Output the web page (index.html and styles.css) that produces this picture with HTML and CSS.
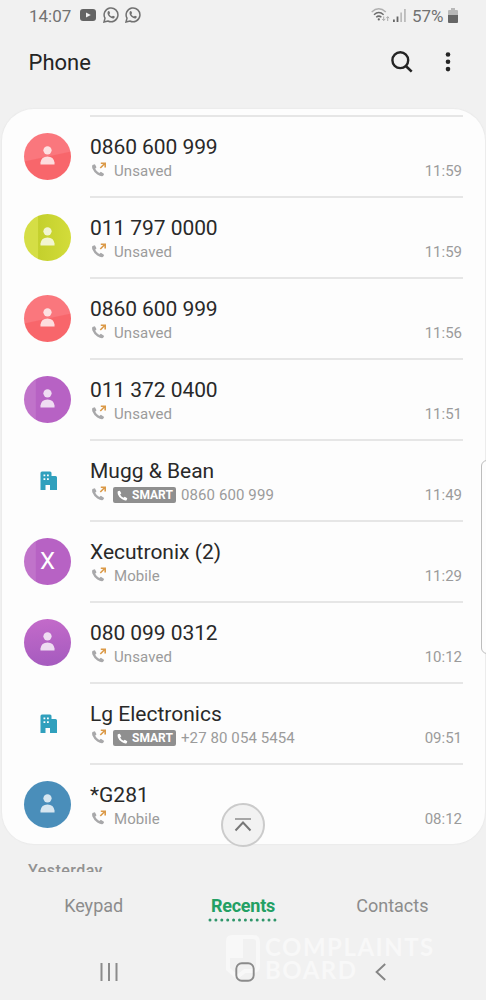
FILE: index.html
```
<!DOCTYPE html>
<html lang="en">
<head>
<meta charset="utf-8">
<title>Phone</title>
<link rel="stylesheet" href="styles.css">
</head>
<body>
<svg class="defs" width="0" height="0">
  <symbol id="handset" viewBox="0 0 14 14"><path d="M1 1.500 3.600.9 5.500 4.200 4 5.800Q5.200 8.600 8.200 10L9.900 8.700 13.100 10.600 12.200 13Q10 14 6.200 11.600 2.400 9.200 1.200 5.600.4 3 1 1.500Z"/></symbol>
  <symbol id="outgoing" viewBox="0 0 16 16"><path fill="#a8a8aa" d="M1.400 3 3.900 2.200 5.500 5.200 4.200 6.700Q5.400 9.300 8.300 11L9.900 9.700 13.200 11.900 12 14.100Q9.900 14.800 6.300 12.500 2.700 10 1.300 6.300.8 4.200 1.400 3Z"/><path fill="none" stroke="#db9a48" stroke-width="1.600" d="M9.300 6 14 1.300M9.800 1.300H14.200V5.400"/></symbol>
  <symbol id="person" viewBox="0 0 16 20"><circle cx="8" cy="4.500" r="4.400"/><path d="M.5 19.500V17.500Q1.400 11 8 11T15.500 17.500V19.500Z"/></symbol>
  <symbol id="building" viewBox="0 0 18 20"><path fill="#30a0bd" fill-rule="evenodd" d="M2 .5H10Q11.500.5 11.500 2V5H15.500Q17 5 17 6.500V19H10V14H5.500V19H.5V2Q.5.5 2 .5ZM3.500 3.500V5.300H5.300V3.500ZM7 3.500V5.300H8.800V3.500ZM3.500 7.300V9.100H5.300V7.300ZM7 7.300V9.100H8.800V7.300Z"/></symbol>
  <symbol id="chat" viewBox="0 0 16 16"><path fill="none" stroke="#717171" stroke-width="1.500" d="M1 15 2 11.200A6.900 6.900 0 1 1 4.900 14Z"/><path fill="#717171" d="M4.700 4.700Q5.400 3.700 6.300 4.200L7.100 6.100 6.300 7.200Q7.200 8.800 8.900 9.600L10 8.700 11.800 9.600Q12 10.800 10.700 11.500 9 12.100 6.400 9.800 3.800 7 4.700 4.700Z"/></symbol>
</svg>
<div class="screen">
  <div class="status">
    <span class="clock">14:07</span>
    <svg class="video" width="16" height="12" viewBox="0 0 16 12"><rect width="16" height="12" rx="3" fill="#646464"/><path fill="#f1f1f1" d="M6 3.400 10.800 6 6 8.600Z"/></svg>
    <svg class="chat" width="16" height="16"><use href="#chat"/></svg>
    <svg class="chat" width="16" height="16"><use href="#chat"/></svg>
    <svg class="wifi" width="19" height="14" viewBox="0 0 19 14"><g fill="none" stroke-width="1.500"><path stroke="#b0b0b0" d="M.7 4Q7.700-2.400 14.800 4"/><path stroke="#6c6c6c" d="M3 6.700Q7.800 2.400 12.600 6.700M5.200 9.300Q7.800 7 10.400 9.300"/></g><circle cx="7.800" cy="11.400" r="1.100" fill="#646464"/><path fill="none" stroke="#aaa" d="M12.700 8.500V12.500M11.200 11 12.700 12.500 14.200 11M16.700 13V8.700M15.200 10.200 16.700 8.700 18.200 10.200"/></svg>
    <svg class="signal" width="13" height="13" viewBox="0 0 13 13"><path fill="#666" d="M0 10.500H1.800V13H0ZM3.600 7.500H5.400V13H3.600Z"/><path fill="#bbb" d="M7.300 3.500H9V13H7.300ZM11 0H12.800V13H11Z"/></svg>
    <span class="charge">57%</span>
    <svg class="battery" width="10" height="15" viewBox="0 0 10 15"><path fill="#b8b8b8" d="M3 0H7V2H9Q10 2 10 3V8H0V3Q0 2 1 2H3Z"/><path fill="#666" d="M0 7H10V14Q10 15 9 15H1Q0 15 0 14Z"/></svg>
  </div>
  <header class="header">
    <h1>Phone</h1>
    <svg width="22" height="22" viewBox="0 0 22 22"><circle cx="9.300" cy="9.200" r="7.900" fill="none" stroke="#242424" stroke-width="2.400"/><path stroke="#242424" stroke-width="2.600" d="M14.600 14.700 20.700 20.600"/></svg>
    <svg width="6" height="20" viewBox="0 0 6 20" fill="#242424"><circle cx="3" cy="2.500" r="2.300"/><circle cx="3" cy="9.800" r="2.300"/><circle cx="3" cy="17.100" r="2.300"/></svg>
  </header>
  <main class="card">
    <section class="call"><div class="avatar red"><svg><use href="#person"/></svg></div><div class="info"><h2 class="digits">0860 600 999</h2><p><svg class="out"><use href="#outgoing"/></svg><span>Unsaved</span><time>11:59</time></p></div></section>
    <section class="call"><div class="avatar lime"><svg><use href="#person"/></svg></div><div class="info"><h2 class="digits">011 797 0000</h2><p><svg class="out"><use href="#outgoing"/></svg><span>Unsaved</span><time>11:59</time></p></div></section>
    <section class="call"><div class="avatar red"><svg><use href="#person"/></svg></div><div class="info"><h2 class="digits">0860 600 999</h2><p><svg class="out"><use href="#outgoing"/></svg><span>Unsaved</span><time>11:56</time></p></div></section>
    <section class="call"><div class="avatar purple"><svg><use href="#person"/></svg></div><div class="info"><h2 class="digits">011 372 0400</h2><p><svg class="out"><use href="#outgoing"/></svg><span>Unsaved</span><time>11:51</time></p></div></section>
    <section class="call"><div class="avatar business"><svg><use href="#building"/></svg></div><div class="info"><h2>Mugg &amp; Bean</h2><p><svg class="out"><use href="#outgoing"/></svg><b class="smart"><svg><use href="#handset"/></svg>SMART</b><span class="number">0860 600 999</span><time>11:49</time></p></div></section>
    <section class="call"><div class="avatar purple">X</div><div class="info"><h2>Xecutronix (2)</h2><p><svg class="out"><use href="#outgoing"/></svg><span>Mobile</span><time>11:29</time></p></div></section>
    <section class="call"><div class="avatar violet"><svg><use href="#person"/></svg></div><div class="info"><h2 class="digits">080 099 0312</h2><p><svg class="out"><use href="#outgoing"/></svg><span>Unsaved</span><time>10:12</time></p></div></section>
    <section class="call"><div class="avatar business"><svg><use href="#building"/></svg></div><div class="info"><h2>Lg Electronics</h2><p><svg class="out"><use href="#outgoing"/></svg><b class="smart"><svg><use href="#handset"/></svg>SMART</b><span class="number">+27 80 054 5454</span><time>09:51</time></p></div></section>
    <section class="call"><div class="avatar blue"><svg><use href="#person"/></svg></div><div class="info"><h2>*G281</h2><p><svg class="out"><use href="#outgoing"/></svg><span>Mobile</span><time>08:12</time></p></div></section>
  </main>
  <div class="day">Yesterday</div>
  <nav class="tabs"><span>Keypad</span><span class="active">Recents<svg width="69" height="4"><path fill="none" stroke="#30966b" stroke-width="3" stroke-linecap="round" stroke-dasharray="0 5.900" d="M2 2H67.500"/></svg></span><span>Contacts</span></nav>
  <div class="keys">
    <svg width="18" height="18" viewBox="0 0 18 18"><path stroke="#8b8b8b" stroke-width="2" d="M1.500 0V18M9 0V18M16.500 0V18"/></svg>
    <svg class="home" width="20" height="20" viewBox="0 0 20 20"><rect x="1.300" y="1.300" width="17.400" height="17.400" rx="5.500" fill="none" stroke="#8b8b8b" stroke-width="1.900"/></svg>
    <svg width="12" height="18" viewBox="0 0 12 18"><path fill="none" stroke="#858585" stroke-width="1.900" d="M10.200 1 1.600 9 10.200 17"/></svg>
  </div>
  <div class="watermark">
    <svg width="35" height="44" viewBox="0 0 35 44"><path fill="none" stroke="#f8f8f8" stroke-width="4" d="M7 2H28Q33 2 33 7V31Q33 36 28 36H20L12 42 3 34V6Q3 2 7 2Z"/><path fill="#f8f8f8" d="M3 3H18V23H3Z"/></svg>
    <div><div>COMPLAINTS</div><div>BOARD</div></div>
  </div>
  <div class="edge"></div>
  <div class="totop"><svg width="18" height="14" viewBox="0 0 18 14"><path stroke="#929292" stroke-width="1.600" d="M1 1H17"/><path fill="none" stroke="#777" stroke-width="2" d="M1.500 12.500 9 4.500 16.500 12.500"/></svg></div>
</div>
</body>
</html>
```
FILE: styles.css
```
* { box-sizing: border-box; }
body { margin: 0; background: #f1f1f1; font-family: Roboto, "Liberation Sans", sans-serif; }
h1, h2, p { margin: 0; font-weight: 400; }
svg { display: block; flex: none; }
.defs { position: absolute; }
.screen { position: relative; width: 486px; height: 1000px; overflow: hidden; display: flex; flex-direction: column; }

.status { height: 32px; padding: 0 28px 0 29px; display: flex; align-items: center; font-size: 17px; color: #727272; }
.clock { width: 51px; }
.video { margin-top: -2px; }
.chat { margin-left: 6.500px; margin-top: -2px; }
.wifi { margin-left: auto; margin-top: -3px; }
.signal { margin: -2px 6px 0 3px; }
.charge { width: 32px; }
.battery { margin-left: 4px; margin-top: -2px; }

.header { height: 77px; padding: 0 35px 16px 28.500px; display: flex; align-items: center; color: #242424; }
.header h1 { flex: 1; font-size: 22px; line-height: 26px; }
.header svg { margin-top: -2px; }
.header svg + svg { margin-left: 32px; }

.card { height: 735px; flex: none; margin: 0 1px 0 2px; padding-top: 5.500px; background: #fdfdfd; border-radius: 32px; box-shadow: 0 0 1px 1px #ebebeb; overflow: hidden; }
.call { height: 81px; padding: 0 22px; display: flex; gap: 19px; }
.avatar { width: 47px; height: 47px; margin-top: 18px; border-radius: 50%; display: flex; align-items: center; justify-content: center; color: #fff; font-size: 24px; }
.avatar svg { width: 15px; height: 19px; margin: -1px 1px 0 0; fill: #fff; opacity: .78; }
.red { background: linear-gradient(168deg, #fa777d 0 49%, #f8666b 51% 100%); }
.lime { background: linear-gradient(90deg, #d5de45 0 29%, #c4d02d 31%, #d3dc3a 100%); }
.purple { background: linear-gradient(90deg, #c073ca 0 24%, #b762c4 26% 100%); }
.violet { background: linear-gradient(175deg, #c46bca, #a45abe); }
.blue { background: #4a8eba; }
.avatar.business svg { width: 18px; height: 20px; opacity: 1; margin: 1px 0 0 2px; }
.info { flex: 1; border-top: 2px solid #e6e6e6; padding-top: 18.500px; }
.info h2 { font-size: 21px; line-height: 25px; color: #292929; white-space: nowrap; }
.info .digits { letter-spacing: -.07px; }
.info p { height: 22px; padding-right: 1px; display: flex; align-items: center; font-size: 15px; color: #9b9b9b; }
.info span { letter-spacing: .1px; }
.out { width: 16px; height: 16px; margin: -2px 7px 0 1px; }
.info time { margin-left: auto; }
.smart { width: 63px; height: 16px; margin-left: -1px; padding-left: 4px; display: flex; align-items: center; gap: 4px; border-radius: 2px; background: #8f8f8f; color: #fff; font-size: 12px; }
.smart svg { width: 11px; height: 11px; fill: #fff; }
.number { margin-left: 5px; }

.day { height: 28px; flex: none; padding: 17px 28px 0; overflow: hidden; font-size: 16px; line-height: 20px; letter-spacing: .45px; font-weight: 500; color: #929292; }
.tabs { height: 68px; padding: 23px 19px 0; display: grid; grid-template-columns: repeat(3, 1fr); text-align: center; font-size: 18px; line-height: 22px; color: #8c8c8c; }
.active { color: #23a064; font-weight: 700; letter-spacing: -.25px; }
.active svg { margin: 1px auto 0; }
.keys { height: 60px; padding: 4px 99px 0 100px; display: flex; align-items: center; justify-content: space-between; position: relative; z-index: 1; }
.home { margin-right: 4px; }

.watermark { position: absolute; left: 225px; top: 935px; display: flex; gap: 5px; color: #f8f8f8; font: 700 24px/23px Lato, sans-serif; letter-spacing: 1.500px; }
.edge { position: absolute; left: 481px; top: 460px; width: 12px; height: 194px; border: 1px solid #bdbdbd; border-radius: 7px; background: #fdfdfd; }
.totop { position: absolute; left: 221px; top: 803px; width: 44px; height: 44px; border: 2px solid #cbcbcb; border-radius: 50%; background: #f2f2f2; display: flex; align-items: center; justify-content: center; }
```
